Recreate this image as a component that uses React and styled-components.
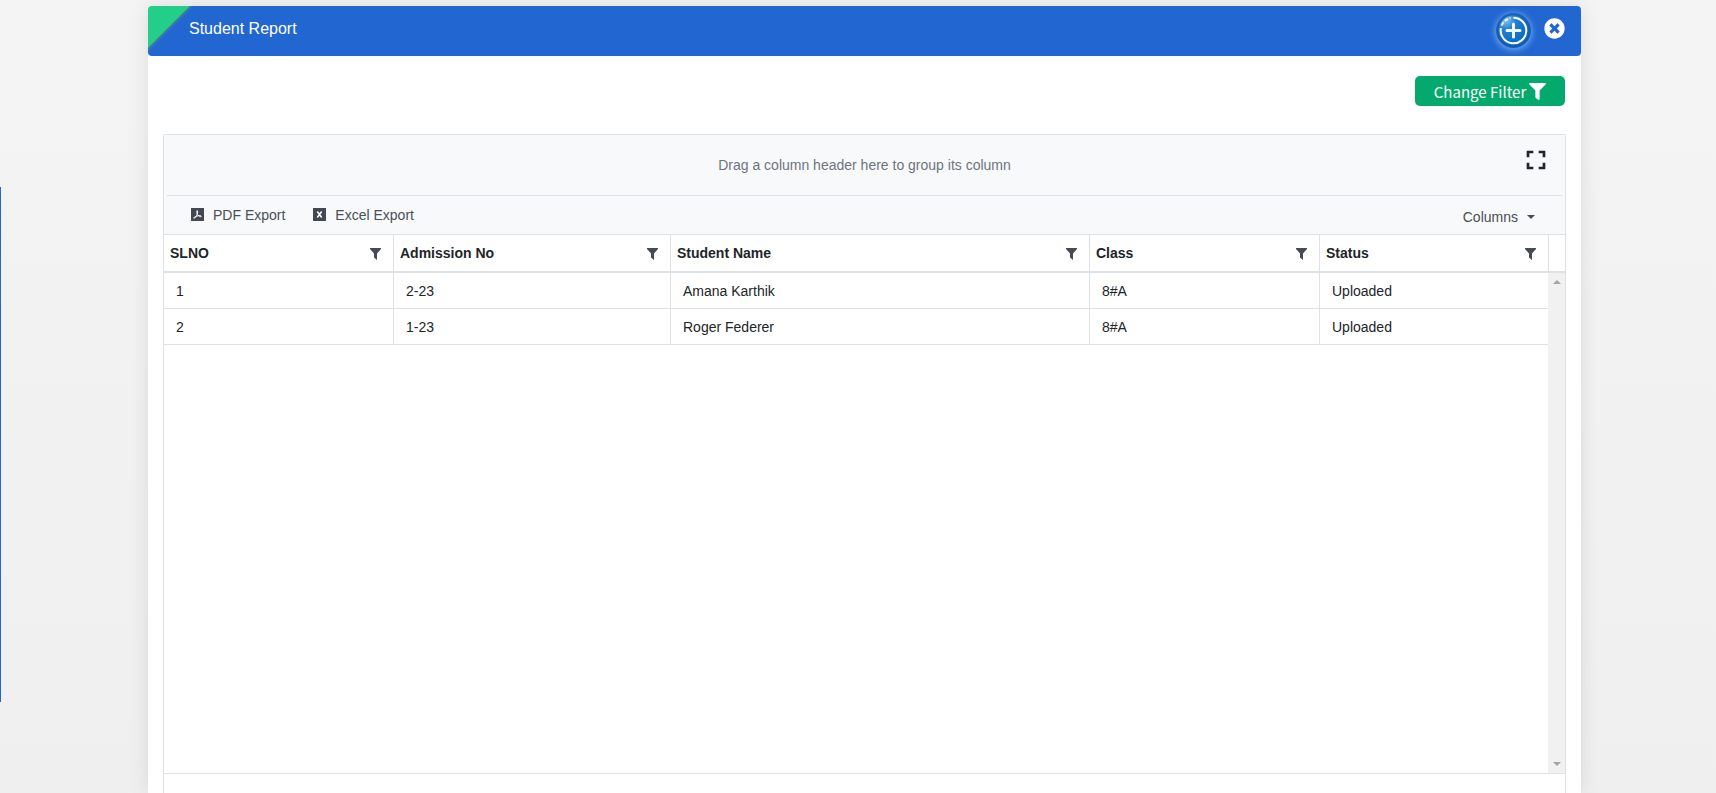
import React from 'react'
import styled, { createGlobalStyle } from 'styled-components'
import { FaFilter, FaTimesCircle } from 'react-icons/fa'
import { MdFullscreen } from 'react-icons/md'

const columns = [
    { field: 'slno', title: 'SLNO', width: 230 },
    { field: 'admissionNo', title: 'Admission No', width: 277 },
    { field: 'name', title: 'Student Name', width: 419 },
    { field: 'className', title: 'Class', width: 230 },
    { field: 'status', title: 'Status', width: 228 },
]

const totalWidth = columns.reduce((sum, col) => sum + col.width, 0)

const students = [
    { slno: 1, admissionNo: '2-23', name: 'Amana Karthik', className: '8#A', status: 'Uploaded' },
    { slno: 2, admissionNo: '1-23', name: 'Roger Federer', className: '8#A', status: 'Uploaded' },
]

/* Glossy round plus button */
function PlusIcon() {
    return (
        <svg width="35" height="35" viewBox="0 0 35 35" aria-hidden="true">
            <defs>
                <linearGradient id="plusRim" x1="0" y1="0" x2="0" y2="1">
                    <stop offset="0" stopColor="#1c62b4" />
                    <stop offset="1" stopColor="#1756a8" />
                </linearGradient>
                <radialGradient id="plusFill" cx="0.25" cy="0.15" r="0.8">
                    <stop offset="0" stopColor="#8cc4ee" />
                    <stop offset="0.4" stopColor="#2380d0" />
                    <stop offset="1" stopColor="#0a6cc6" />
                </radialGradient>
            </defs>
            <circle cx="17.5" cy="17.5" r="17" fill="url(#plusRim)" />
            <circle cx="17.5" cy="17.5" r="15" fill="url(#plusFill)" />
            <path d="M17.5 4.7a12.8 12.8 0 1 1-12.6 10.4" fill="none" stroke="#fff" strokeWidth="2" />
            <path d="M5.6 12.6a12.8 12.8 0 0 1 9-7.6" fill="none" stroke="#fff" strokeWidth="2" strokeDasharray="4 1.5" opacity="0.85" />
            <path d="M17.5 11v13M11 17.5h13" stroke="#f1f7fd" strokeWidth="3" strokeLinecap="round" />
        </svg>
    )
}

function PdfIcon() {
    return (
        <svg width="13" height="13" viewBox="0 0 13 13" aria-hidden="true">
            <path d="M0 0h13v13H0z" fill="#424952" />
            <path d="M6 2.6c1.2 0 .7 2.2.1 3.7C5.4 8 4.1 10.3 3.1 10.3c-1 0 .2-1.6 2.7-2.2 2.3-.6 4.5-.6 4.5.2 0 1-2.5.1-3.7-1.7C5.7 5.2 5.3 2.6 6 2.6z" fill="none" stroke="#fff" strokeWidth="1" />
        </svg>
    )
}

function ExcelIcon() {
    return (
        <svg width="13" height="13" viewBox="0 0 13 13" aria-hidden="true">
            <path d="M0 0h13v13H0z" fill="#424952" />
            <path d="M4.3 3.5l4.4 6M8.7 3.5l-4.4 6" stroke="#fff" strokeWidth="1.5" />
        </svg>
    )
}

function FunnelIcon() {
    return (
        <svg width="11" height="12" viewBox="0 0 11 12" aria-hidden="true">
            <path d="M0 0h11v1L7 5.5V12L4 9.5v-4L0 1z" fill="#454a54" />
        </svg>
    )
}

function App() {
    return (
        <Page>
            <GlobalStyle />
            <SideTab />
            <Card>
                <CardHeader>
                    <Title>Student Report</Title>
                    <HeaderActions>
                        <AddButton aria-label="Add"><PlusIcon /></AddButton>
                        <CloseButton aria-label="Close"><FaTimesCircle size={21} /></CloseButton>
                    </HeaderActions>
                </CardHeader>
                <CardBody>
                    <FilterButton>
                        Change Filter
                        <FaFilter size={17} />
                    </FilterButton>
                    <Grid>
                        <GroupPanel>
                            Drag a column header here to group its column
                            <FullscreenButton aria-label="Full screen"><MdFullscreen size={32} /></FullscreenButton>
                        </GroupPanel>
                        <Toolbar>
                            <ToolButton><PdfIcon />PDF Export</ToolButton>
                            <ToolButton><ExcelIcon />Excel Export</ToolButton>
                            <ColumnsButton>
                                Columns
                                <svg width="8" height="4" viewBox="0 0 8 4" aria-hidden="true">
                                    <path d="M0 0h8L4 4z" fill="#454a54" />
                                </svg>
                            </ColumnsButton>
                        </Toolbar>
                        <Content>
                            <div>
                                <Table>
                                    <colgroup>
                                        {columns.map(col => (
                                            <col key={col.field} style={{ width: `${(col.width / totalWidth) * 100}%` }} />
                                        ))}
                                    </colgroup>
                                    <thead>
                                        <tr>
                                            {columns.map(col => (
                                                <HeadCell key={col.field} scope="col">
                                                    <HeadInner>
                                                        {col.title}
                                                        <FunnelButton aria-label={`Filter ${col.title}`}><FunnelIcon /></FunnelButton>
                                                    </HeadInner>
                                                </HeadCell>
                                            ))}
                                        </tr>
                                    </thead>
                                    <tbody>
                                        {students.map(student => (
                                            <tr key={student.slno}>
                                                {columns.map(col => <Cell key={col.field}>{student[col.field]}</Cell>)}
                                            </tr>
                                        ))}
                                    </tbody>
                                </Table>
                            </div>
                            <ScrollColumn>
                                <ScrollHead />
                                <ScrollTrack>
                                    <svg width="8" height="4" viewBox="0 0 8 4" aria-hidden="true"><path d="M0 4h8L4 0z" fill="#a3a3a3" /></svg>
                                    <svg width="8" height="4" viewBox="0 0 8 4" aria-hidden="true"><path d="M0 0h8L4 4z" fill="#a3a3a3" /></svg>
                                </ScrollTrack>
                            </ScrollColumn>
                        </Content>
                        <Pager />
                    </Grid>
                </CardBody>
            </Card>
        </Page>
    )
}

export default App


const GlobalStyle = createGlobalStyle`
    * {
        box-sizing: border-box;
    }
    body {
        margin: 0;
        font-family: "Liberation Sans", Arial, sans-serif;
        font-size: 14px;
        color: #212529;
    }
    button {
        font: inherit;
        border: none;
        background: none;
        padding: 0;
        cursor: pointer;
    }
    svg {
        display: block;
    }
`

const Page = styled.div`
    display: flex;
    height: 100vh;
    overflow: hidden;
    background: linear-gradient(#f4f4f4, #efefef);
`

/* Only the edge of the collapsed side tab is on screen */
const SideTab = styled.div`
    width: 1px;
    margin: 187px 0 91px;
    background: #2166d1;
`

const Card = styled.main`
    flex: 1;
    display: flex;
    flex-direction: column;
    margin: 6px 135px 0 147px;
    background: #fff;
    border-radius: 4px 4px 0 0;
    box-shadow: 0 0 20px rgba(0, 0, 0, 0.1);
`

const CardHeader = styled.header`
    display: flex;
    justify-content: space-between;
    height: 50px;
    padding: 0 16px 0 41px;
    border-radius: 4px;
    color: #fff;
    background: linear-gradient(135deg, #22ce88 29px, #3f7f9c 30px, #2166d1 33px);
`

const Title = styled.h1`
    margin: 0;
    font-size: 16px;
    font-weight: normal;
    line-height: 46px;
`

const HeaderActions = styled.div`
    display: flex;
    align-items: flex-start;
    gap: 13px;
    padding-top: 7px;
`

const AddButton = styled.button`
    border-radius: 50%;
    box-shadow: 0 1px 6px 1px rgba(150, 195, 255, 0.7);
`

const CloseButton = styled.button`
    padding-top: 5px;
    color: #fff;
`

const CardBody = styled.div`
    flex: 1;
    display: flex;
    flex-direction: column;
    padding: 20px 15px 0;
`

const FilterButton = styled.button`
    align-self: flex-end;
    display: flex;
    align-items: center;
    justify-content: center;
    gap: 3px;
    width: 150px;
    height: 30px;
    margin-right: 1px;
    border-radius: 5px;
    color: #fff;
    background: #04aa6d;
    font-family: "Noto Sans CJK SC", sans-serif;
    font-size: 15px;
`

const Grid = styled.section`
    flex: 1;
    display: flex;
    flex-direction: column;
    margin-top: 28px;
    border: 1px solid #dee2e6;
    border-bottom: none;
    border-radius: 2px 2px 0 0;
`

const GroupPanel = styled.div`
    position: relative;
    display: flex;
    align-items: center;
    justify-content: center;
    height: 60px;
    color: #6c757d;
    background: #f8f9fb;
`

const FullscreenButton = styled.button`
    position: absolute;
    top: 9px;
    right: 13px;
    color: #212529;
`

const Toolbar = styled.div`
    display: flex;
    align-items: center;
    gap: 28px;
    height: 39px;
    padding: 0 27px;
    color: #495057;
    background: linear-gradient(#dee2e6, #dee2e6) center top / calc(100% - 6px) 1px no-repeat #f8f9fb;
`

const ToolButton = styled.button`
    display: flex;
    align-items: center;
    gap: 9px;
    color: inherit;
`

const ColumnsButton = styled(ToolButton)`
    margin-left: auto;
    margin-right: 3px;
    padding-top: 4px;
`

const Content = styled.div`
    flex: 1;
    display: grid;
    grid-template-columns: 1fr 17px;
    border-top: 1px solid #dee2e6;
`

const Table = styled.table`
    width: 100%;
    table-layout: fixed;
    border-collapse: separate;
    border-spacing: 0;
`

const HeadCell = styled.th`
    height: 38px;
    padding: 0 12px 0 6px;
    border-right: 1px solid #dee2e6;
    border-bottom: 2px solid #dee2e6;
    text-align: left;

    &:last-child {
        border-right: none;
    }
`

const HeadInner = styled.div`
    display: flex;
    align-items: center;
    justify-content: space-between;
`

const FunnelButton = styled.button`
    padding-top: 2px;
`

const Cell = styled.td`
    height: 36px;
    padding: 0 12px;
    border-right: 1px solid #dee2e6;
    border-bottom: 1px solid #dee2e6;

    &:last-child {
        border-right: none;
    }
`

const ScrollColumn = styled.div`
    display: flex;
    flex-direction: column;
`

const ScrollHead = styled.div`
    height: 38px;
    border-left: 1px solid #dee2e6;
    border-bottom: 2px solid #dee2e6;
`

const ScrollTrack = styled.div`
    flex: 1;
    display: flex;
    flex-direction: column;
    align-items: center;
    justify-content: space-between;
    padding: 7px 0;
    background: #f1f1f1;
`

const Pager = styled.footer`
    height: 20px;
    border-top: 1px solid #dee2e6;
`
